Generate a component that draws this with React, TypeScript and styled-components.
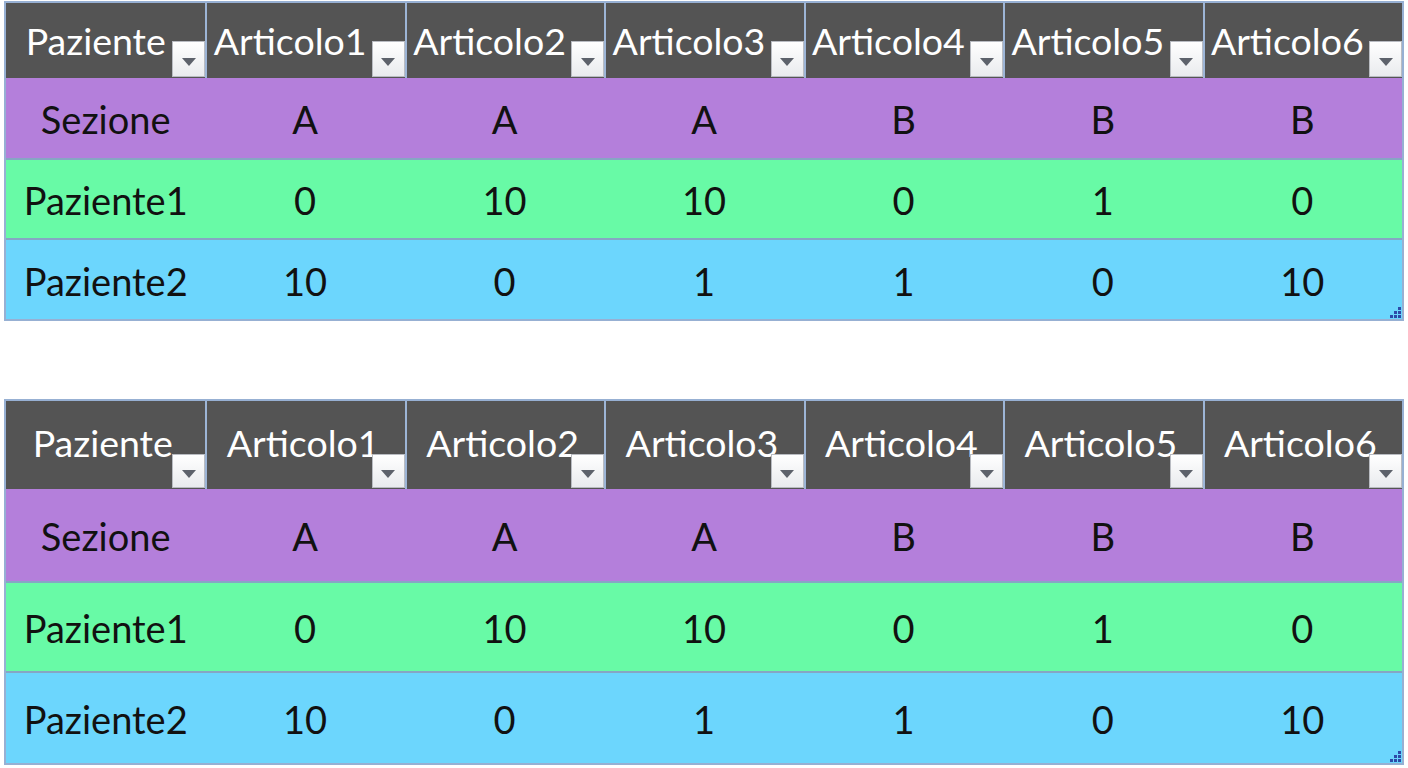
import styled, { createGlobalStyle } from "styled-components";

type Layout = "left" | "center";

type TableData = {
    layout: Layout;
    headHeight: number;
    rowHeights: number[];
};

const headers = ["Paziente", "Articolo1", "Articolo2", "Articolo3", "Articolo4", "Articolo5", "Articolo6"];

const rows = [
    { color: "#b47fdb", cells: ["Sezione", "A", "A", "A", "B", "B", "B"] },
    { color: "#68faa6", cells: ["Paziente1", "0", "10", "10", "0", "1", "0"] },
    { color: "#6cd6fd", cells: ["Paziente2", "10", "0", "1", "1", "0", "10"] },
];

const GlobalStyle = createGlobalStyle`
    body {
        margin: 0;
        background: #ffffff;
        font-family: Lato, "Open Sans", sans-serif;
    }
`;

const Page = styled.div`
    display: flex;
    flex-direction: column;
    gap: 78px;
    padding: 1px 4px 0 4px;
    width: 1400px;
`;

const Table = styled.div`
    position: relative;
    display: flex;
    flex-direction: column;
    border: 2px solid #97b0d3;
    background: #ffffff;
`;

const Row = styled.div<{ $height: number; $bg: string; $line?: boolean }>`
    display: grid;
    grid-template-columns: repeat(7, 1fr);
    height: ${(p) => p.$height}px;
    background: ${(p) => p.$bg};
    border-top: ${(p) => (p.$line ? "2px solid #86a6c4" : "none")};
`;

// in the first table the title sits left of the filter button, in the second it is centred in the cell
const HeadCell = styled.div<{ $layout: Layout }>`
    position: relative;
    display: flex;
    align-items: center;
    justify-content: center;
    padding: ${(p) => (p.$layout === "left" ? "0 32px 0 0" : "0 6px 6px 0")};
    color: #ffffff;
    font-size: 37.5px;
    border-left: 2px solid #9db5d6;

    &:first-child {
        border-left: none;
        padding-left: ${(p) => (p.$layout === "left" ? "12px" : "0")};
    }
`;

const FilterBtn = styled.div<{ $tall: boolean }>`
    position: absolute;
    right: 0;
    bottom: 1px;
    width: 33px;
    height: ${(p) => (p.$tall ? 36 : 34)}px;
    box-sizing: border-box;
    border: 1px solid #b9bcc2;
    background: linear-gradient(#ffffff, #e9ebee);
    display: flex;
    align-items: center;
    justify-content: center;
    padding-top: 6px;
`;

const Arrow = styled.span`
    width: 0;
    height: 0;
    border-left: 7px solid transparent;
    border-right: 7px solid transparent;
    border-top: 8px solid #5d626b;
`;

const Cell = styled.div`
    display: flex;
    align-items: center;
    justify-content: center;
    color: #111111;
    font-size: 38px;
    padding-top: 2px;
`;

const Handle = styled.svg`
    position: absolute;
    right: 1px;
    bottom: 1px;
`;

function ResizeHandle() {
    return (
        <Handle width="11" height="11" viewBox="0 0 11 11">
            <rect x="8" y="0" width="3" height="3" fill="#2d4aa8" />
            <rect x="4" y="4" width="3" height="3" fill="#2d4aa8" />
            <rect x="8" y="4" width="3" height="3" fill="#2d4aa8" />
            <rect x="0" y="8" width="3" height="3" fill="#2d4aa8" />
            <rect x="4" y="8" width="3" height="3" fill="#2d4aa8" />
            <rect x="8" y="8" width="3" height="3" fill="#2d4aa8" />
        </Handle>
    );
}

function DataTable({ layout, headHeight, rowHeights }: TableData) {
    return (
        <Table>
            <Row $height={headHeight} $bg="#545454">
                {headers.map((h) => (
                    <HeadCell key={h} $layout={layout}>
                        {h}
                        <FilterBtn $tall={layout === "left"}>
                            <Arrow />
                        </FilterBtn>
                    </HeadCell>
                ))}
            </Row>
            {rows.map((r, i) => (
                <Row key={r.cells[0]} $height={rowHeights[i]} $bg={r.color} $line={i > 0}>
                    {r.cells.map((c, j) => (
                        <Cell key={j}>{c}</Cell>
                    ))}
                </Row>
            ))}
            <ResizeHandle />
        </Table>
    );
}

function App() {
    return (
        <>
            <GlobalStyle />
            <Page>
                <DataTable layout="left" headHeight={75} rowHeights={[80, 78, 79]} />
                <DataTable layout="center" headHeight={88} rowHeights={[92, 88, 90]} />
            </Page>
        </>
    );
}

export default App;
